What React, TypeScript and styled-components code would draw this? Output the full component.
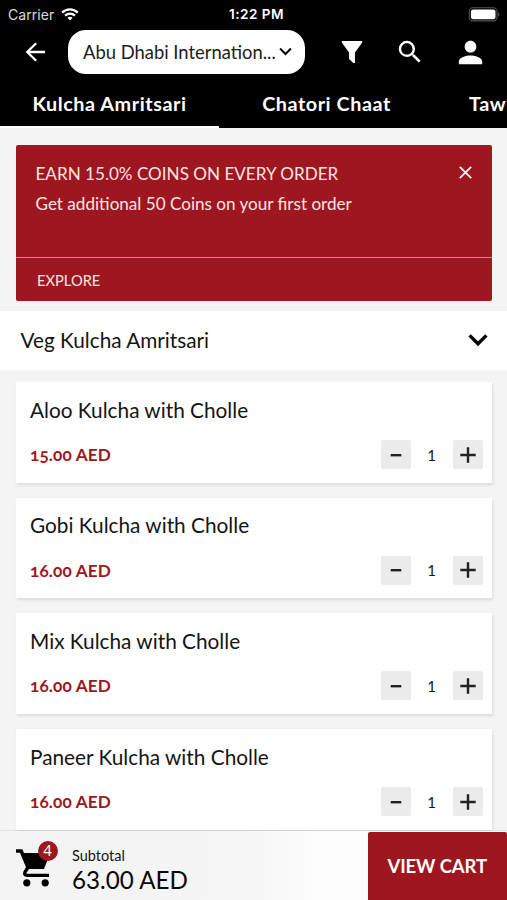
import React from "react";
import styled, { createGlobalStyle } from "styled-components";
import { MdSearch, MdPerson } from "react-icons/md";

const RED = "#9e1620";

const GlobalStyle = createGlobalStyle`
  * { box-sizing: border-box; }
  body { margin: 0; background: #f4f4f4; overflow: hidden; }
  button { border: 0; padding: 0; margin: 0; font: inherit; color: inherit; background: none; }
`;

const Screen = styled.div`
  width: 507px;
  height: 900px;
  display: flex;
  flex-direction: column;
  overflow: hidden;
  background: #f4f4f4;
  color: #141414;
  font-family: Lato, sans-serif;
`;

const Header = styled.header`
  flex: none;
  height: 127.5px;
  background: #000;
  color: #fff;
  display: flex;
  flex-direction: column;
`;

const StatusBar = styled.div`
  height: 30px;
  padding: 0 7px 3px 8px;
  display: grid;
  grid-template-columns: 1fr auto 1fr;
  align-items: center;
  font: 400 14px/27px Inter, sans-serif;
`;

const Carrier = styled.span`
  display: flex;
  align-items: center;
  gap: 7px;
  color: #ddd;
  letter-spacing: 0.05px;
`;

const Clock = styled.span`
  padding: 1px 0 0 5px;
  font-size: 13.6px;
  font-weight: 600;
  letter-spacing: 0.45px;
`;

const BatterySlot = styled.span`
  display: flex;
  justify-content: flex-end;
`;

const Toolbar = styled.div`
  height: 44px;
  padding-left: 25px;
  display: flex;
  align-items: center;
`;

const IconButton = styled.button<{ $left?: number }>`
  display: flex;
  margin-left: ${(p) => p.$left ?? 0}px;
`;

const LocationPill = styled.button`
  width: 237px;
  height: 44px;
  margin-left: 22px;
  padding: 0 13px 0 15px;
  border-radius: 18px;
  background: #fff;
  color: #1c1c1c;
  display: flex;
  align-items: center;
  justify-content: space-between;
  font-size: 18.4px;
  line-height: 44px;
  white-space: nowrap;
`;

const Tabs = styled.nav`
  height: 54px;
  display: flex;
  font-weight: 700;
  font-size: 19.8px;
  line-height: 59px;
  letter-spacing: 0.55px;
  white-space: nowrap;
  overflow: hidden;
`;

const Tab = styled.span<{ $active?: boolean; $width: number }>`
  flex: none;
  width: ${(p) => p.$width}px;
  text-align: center;
  border-bottom: ${(p) => (p.$active ? "2px solid #fff" : "0")};
`;

const Content = styled.main`
  flex: none;
  height: 703.5px;
  overflow: hidden;
`;

const Banner = styled.section`
  margin: 17.5px 15px 0 16px;
  height: 156px;
  border-radius: 2px;
  background: ${RED};
  color: #fbe3e0;
  display: flex;
  flex-direction: column;
`;

const BannerBody = styled.div`
  height: 113px;
  padding: 14px 20px 0 19.5px;
  display: flex;
  justify-content: space-between;
  border-bottom: 1.5px solid #d28a8f;
`;

const BannerTitle = styled.div`
  font-size: 17.1px;
  line-height: 30px;
  white-space: nowrap;
`;

const Explore = styled.button`
  flex: 1;
  padding-left: 21px;
  text-align: left;
  font-size: 14.7px;
`;

const CloseButton = styled.button`
  align-self: flex-start;
  margin-top: 6.5px;
  display: flex;
`;

const SectionHeader = styled.div`
  height: 59px;
  margin-top: 10px;
  padding: 0 19px 1px 20.5px;
  background: #fff;
  display: flex;
  align-items: center;
  justify-content: space-between;
  font-size: 20.75px;
`;

const List = styled.div`
  padding: 12px 15px 0 16px;
  display: flex;
  flex-direction: column;
  gap: 15px;
`;

const Card = styled.article`
  flex: none;
  height: 100.7px;
  padding: 13.5px 9.3px 0 14px;
  background: #fff;
  box-shadow: 1px 2px 3px rgba(0, 0, 0, 0.1);
`;

const ItemName = styled.div`
  font-size: 20.8px;
  line-height: 28px;
`;

const CardRow = styled.div`
  height: 30px;
  margin-top: 16px;
  display: flex;
  align-items: center;
  justify-content: space-between;
`;

const Price = styled.span`
  color: ${RED};
  font-size: 17.2px;
  font-weight: 700;
  letter-spacing: 0.15px;
  font-variant-numeric: oldstyle-nums;
`;

const Stepper = styled.div`
  width: 102px;
  display: flex;
  align-items: center;
  justify-content: space-between;
  font-size: 15px;
`;

const StepButton = styled.button`
  width: 30px;
  height: 29px;
  border-radius: 2px;
  background: #ebebeb;
  display: flex;
  align-items: center;
  justify-content: center;
`;

const Footer = styled.footer`
  flex: 1;
  padding-left: 11px;
  background: linear-gradient(90deg, #f3f3f3 0, #f5f5f5 240px, #fdfdfd 320px);
  box-shadow: 0 -1px 1px rgba(0, 0, 0, 0.06);
  display: flex;
  align-items: stretch;
  z-index: 1;
`;

const Cart = styled.div`
  position: relative;
  width: 61px;
  padding: 17.5px 0 0 4.5px;
`;

const Badge = styled.span`
  position: absolute;
  left: 26.5px;
  top: 10px;
  width: 20px;
  height: 20px;
  border-radius: 50%;
  background: ${RED};
  color: #fff;
  font-size: 15px;
  line-height: 19px;
  text-align: center;
`;

const Totals = styled.div`
  flex: 1;
  padding-top: 15px;
  white-space: nowrap;
`;

const SubtotalLabel = styled.div`
  font-size: 14.5px;
  line-height: 20px;
`;

const SubtotalValue = styled.div`
  font-size: 24.2px;
  line-height: 27px;
  color: #080808;
`;

const ViewCart = styled.button`
  width: 139.5px;
  margin-top: 1px;
  border-radius: 2px 2px 0 0;
  background: ${RED};
  color: #fff;
  font-size: 18.5px;
  font-weight: 700;
  letter-spacing: -0.1px;
`;

const items = [
  { name: "Aloo Kulcha with Cholle", price: "15.00 AED" },
  { name: "Gobi Kulcha with Cholle", price: "16.00 AED" },
  { name: "Mix Kulcha with Cholle", price: "16.00 AED" },
  { name: "Paneer Kulcha with Cholle", price: "16.00 AED" },
];

const WifiIcon = () => (
  <svg width="18" height="13" viewBox="0 0 18 13" fill="none" stroke="#fff" strokeWidth="2.3">
    <path d="M1.2 4.6C5.6.3 12.4.3 16.8 4.6" />
    <path d="M4.1 7.6c2.8-2.6 7-2.6 9.8 0" />
    <path d="M6.4 9.8c1.5-1.4 3.7-1.4 5.2 0L9 12.4z" fill="#fff" stroke="none" />
  </svg>
);

const BatteryIcon = () => (
  <svg width="32" height="15" viewBox="0 0 32 15">
    <rect x="1.2" y=".7" width="27.8" height="13.2" rx="3.8" fill="none" stroke="#555" strokeWidth="1.1" />
    <rect x="2.9" y="2.4" width="24.6" height="9.8" rx="2.2" fill="#fff" />
    <path d="M30.3 5.2c1.4.8 1.4 3.4 0 4.2z" fill="#777" />
  </svg>
);

const BackIcon = () => (
  <svg width="21" height="20" viewBox="0 0 21 20" fill="none" stroke="#fff" strokeWidth="2.3">
    <path d="M20 10H2.4M11.2 1.2 2.2 10l9 8.8" />
  </svg>
);

const FunnelIcon = () => (
  <svg width="22" height="24" viewBox="0 0 22 24" fill="#fff">
    <path d="M.8 1h20.4v1.6L14 12.5V23h-1.6L8 19v-6.5L.8 2.6z" />
  </svg>
);

const CartIcon = () => (
  <svg width="35" height="38" viewBox="0 0 35 38" fill="none" stroke="#000">
    <path d="M0 2h5.2L12 18.2" strokeWidth="3.6" />
    <path d="M6 4h28.2L28 20H12.4z" fill="#000" stroke="none" />
    <path d="M12.2 18 8.9 23.4Q8 26.3 11 26.4h22" strokeWidth="3.4" />
    <circle cx="10.8" cy="33.8" r="3.6" fill="#000" stroke="none" />
    <circle cx="29.2" cy="33.8" r="3.6" fill="#000" stroke="none" />
  </svg>
);

const Chevron = ({ size, weight }: { size: number; weight: number }) => (
  <svg width={size} height={size * 0.7} viewBox="0 0 20 14" fill="none" stroke="#080808" strokeWidth={weight}>
    <path d="M1.6 2.4 10 10.8l8.4-8.4" />
  </svg>
);

const CloseIcon = () => (
  <svg width="13" height="13" viewBox="0 0 13 13" stroke="#fff" strokeWidth="1.7">
    <path d="M.8.8l11.4 11.4M12.2.8.8 12.2" />
  </svg>
);

const StepIcon = ({ plus }: { plus?: boolean }) => (
  <svg width="16" height="16" viewBox="0 0 16 16" stroke="#222" strokeWidth="2.4">
    <path d={plus ? "M.3 8h15.4M8 .3v15.4" : "M2.7 8.2h10.6"} />
  </svg>
);

export default function App() {
  return (
    <Screen>
      <GlobalStyle />
      <Header>
        <StatusBar>
          <Carrier>
            Carrier <WifiIcon />
          </Carrier>
          <Clock>1:22 PM</Clock>
          <BatterySlot>
            <BatteryIcon />
          </BatterySlot>
        </StatusBar>
        <Toolbar>
          <IconButton aria-label="Back">
            <BackIcon />
          </IconButton>
          <LocationPill>
            Abu Dhabi Internation...
            <Chevron size={13} weight={3} />
          </LocationPill>
          <IconButton $left={36} aria-label="Filter">
            <FunnelIcon />
          </IconButton>
          <IconButton $left={32} aria-label="Search">
            <MdSearch size={30} />
          </IconButton>
          <IconButton $left={28} aria-label="Profile">
            <MdPerson size={35} />
          </IconButton>
        </Toolbar>
        <Tabs>
          <Tab $active $width={219}>Kulcha Amritsari</Tab>
          <Tab $width={215}>Chatori Chaat</Tab>
          <Tab $width={107}>Taw</Tab>
        </Tabs>
      </Header>

      <Content>
        <Banner>
          <BannerBody>
            <div>
              <BannerTitle>EARN 15.0% COINS ON EVERY ORDER</BannerTitle>
              <BannerTitle>Get additional 50 Coins on your first order</BannerTitle>
            </div>
            <CloseButton aria-label="Close">
              <CloseIcon />
            </CloseButton>
          </BannerBody>
          <Explore>EXPLORE</Explore>
        </Banner>

        <SectionHeader>
          Veg Kulcha Amritsari
          <Chevron size={20} weight={3.4} />
        </SectionHeader>

        <List>
          {items.map((item) => (
            <Card key={item.name}>
              <ItemName>{item.name}</ItemName>
              <CardRow>
                <Price>{item.price}</Price>
                <Stepper>
                  <StepButton aria-label="Remove one">
                    <StepIcon />
                  </StepButton>
                  1
                  <StepButton aria-label="Add one">
                    <StepIcon plus />
                  </StepButton>
                </Stepper>
              </CardRow>
            </Card>
          ))}
        </List>
      </Content>

      <Footer>
        <Cart>
          <CartIcon />
          <Badge>4</Badge>
        </Cart>
        <Totals>
          <SubtotalLabel>Subtotal</SubtotalLabel>
          <SubtotalValue>63.00 AED</SubtotalValue>
        </Totals>
        <ViewCart>VIEW CART</ViewCart>
      </Footer>
    </Screen>
  );
}
